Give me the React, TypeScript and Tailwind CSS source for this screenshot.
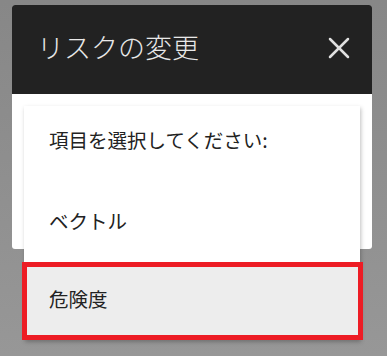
import { X } from 'lucide-react';

const items = ['項目を選択してください:', 'ベクトル', '危険度'];

export default function App() {
  return (
    <div
      className="relative h-[356px] w-full overflow-hidden bg-gradient-to-b from-[#878787] to-[#979797] pt-[5px]"
      style={{ fontFamily: '"Noto Sans CJK JP", "Noto Sans", sans-serif' }}
    >
      <div className="ml-[12px] w-[360px] overflow-hidden rounded-[3px] bg-white">
        <div className="flex h-[89px] items-center justify-between bg-[#222222] pb-[4px] pl-[25px] pr-[15px]">
          <h1 className="text-[27px] font-light text-[#e8e8e8]">リスクの変更</h1>
          <X className="h-[36px] w-[36px] text-[#e0e0e0]" strokeWidth={1.7} />
        </div>
        <div className="h-[155px]" />
      </div>

      <ul className="absolute top-[106px] left-[24px] w-[336px] bg-white shadow-[1px_2px_4px_rgba(0,0,0,0.25)]">
        {items.map((item, i) =>
          i === 2 ? (
            <li
              key={item}
              className="-mr-[3px] -ml-[2px] flex h-[78px] items-center border-[5px] border-[#ed1c24] bg-[#ededed] pb-[4px] pl-[22px] text-[19.5px] text-[#222]"
            >
              {item}
            </li>
          ) : (
            <li
              key={item}
              className={`flex h-[78px] items-center pl-[25px] text-[19.5px] text-[#222] ${i === 0 ? 'pb-[10px]' : 'pb-[4px]'}`}
            >
              {item}
            </li>
          )
        )}
      </ul>
    </div>
  );
}
